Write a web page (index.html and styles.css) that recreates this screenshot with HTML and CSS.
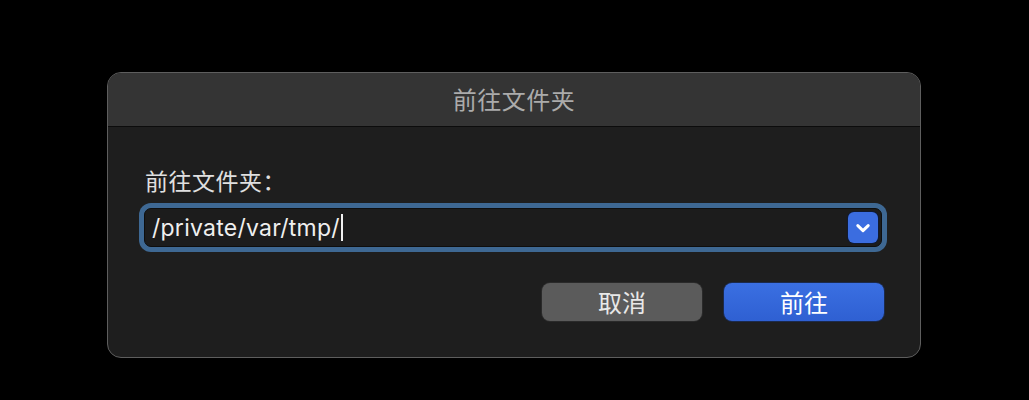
FILE: index.html
```html
<!DOCTYPE html>
<html lang="zh">
<head>
<meta charset="utf-8">
<title>前往文件夹</title>
<link rel="stylesheet" href="styles.css">
</head>
<body>
<div class="stage">
  <div class="window">
    <div class="titlebar">前往文件夹</div>
    <div class="content">
      <div class="label">前往文件夹：</div>
      <div class="ring">
        <div class="field">
          <span class="value">/private/var/tmp/</span><span class="caret"></span>
          <span class="drop">
            <svg width="18" height="18" viewBox="0 0 18 18"><path d="M3.8 6.6 L9 11.6 L14.2 6.6" fill="none" stroke="#fff" stroke-width="3" stroke-linecap="round" stroke-linejoin="round"/></svg>
          </span>
        </div>
      </div>
      <div class="actions">
        <button class="btn cancel">取消</button>
        <button class="btn go">前往</button>
      </div>
    </div>
  </div>
</div>
</body>
</html>
```

FILE: styles.css
```css
html, body {
  margin: 0;
  padding: 0;
  background: #000;
}
body {
  font-family: "Noto Sans CJK SC", "Noto Sans", sans-serif;
}
.stage {
  padding: 72px 0 0 107px;
}
.window {
  width: 812px;
  border: 1px solid #5e5e5e;
  border-radius: 14px;
  background: #1e1e1e;
  overflow: hidden;
}
.titlebar {
  box-sizing: border-box;
  height: 54px;
  padding-bottom: 3px;
  background: #343434;
  border-bottom: 1px solid #0c0c0c;
  display: flex;
  align-items: center;
  justify-content: center;
  color: #ababab;
  font-size: 24px;
  letter-spacing: 0.5px;
}
.content {
  padding: 38px 33px 36px 31px;
}
.label {
  height: 30px;
  line-height: 30px;
  padding-left: 6px;
  color: #e0e0e0;
  font-size: 23px;
  letter-spacing: 0.5px;
}
.ring {
  margin-top: 8px;
  padding: 5px;
  background: #3e6893;
  border-radius: 12px;
}
.field {
  height: 37px;
  border: 1px solid #0e0e0e;
  border-radius: 7px;
  background: #1c1c1c;
  display: flex;
  align-items: center;
  padding-left: 7px;
}
.value {
  font-family: "Inter", "Liberation Sans", sans-serif;
  font-size: 23px;
  color: #efefef;
  letter-spacing: 0.25px;
}
.caret {
  width: 2px;
  height: 27px;
  margin-left: 1px;
  background: #f0f0f0;
}
.drop {
  margin-left: auto;
  margin-right: 3px;
  width: 30px;
  height: 31px;
  border-radius: 6px;
  background: #3b6de0;
  box-shadow: 0 0 0 1px #0f1a33;
  display: flex;
  align-items: center;
  justify-content: center;
}
.actions {
  margin-top: 31px;
  padding-right: 3px;
  display: flex;
  justify-content: flex-end;
  gap: 22px;
}
.btn {
  width: 160px;
  height: 38px;
  border: none;
  border-radius: 8px;
  font-family: "Noto Sans CJK SC", sans-serif;
  font-size: 24px;
  padding: 0;
  line-height: 36px;
}
.cancel {
  background: #5b5b5b;
  color: #e8e8e8;
  box-shadow: 0 0 0 1px #2a2a2a;
}
.go {
  background: linear-gradient(#3a6fe2, #2f60d2);
  color: #fff;
  box-shadow: 0 0 0 1px #1b2a4d;
}
```
